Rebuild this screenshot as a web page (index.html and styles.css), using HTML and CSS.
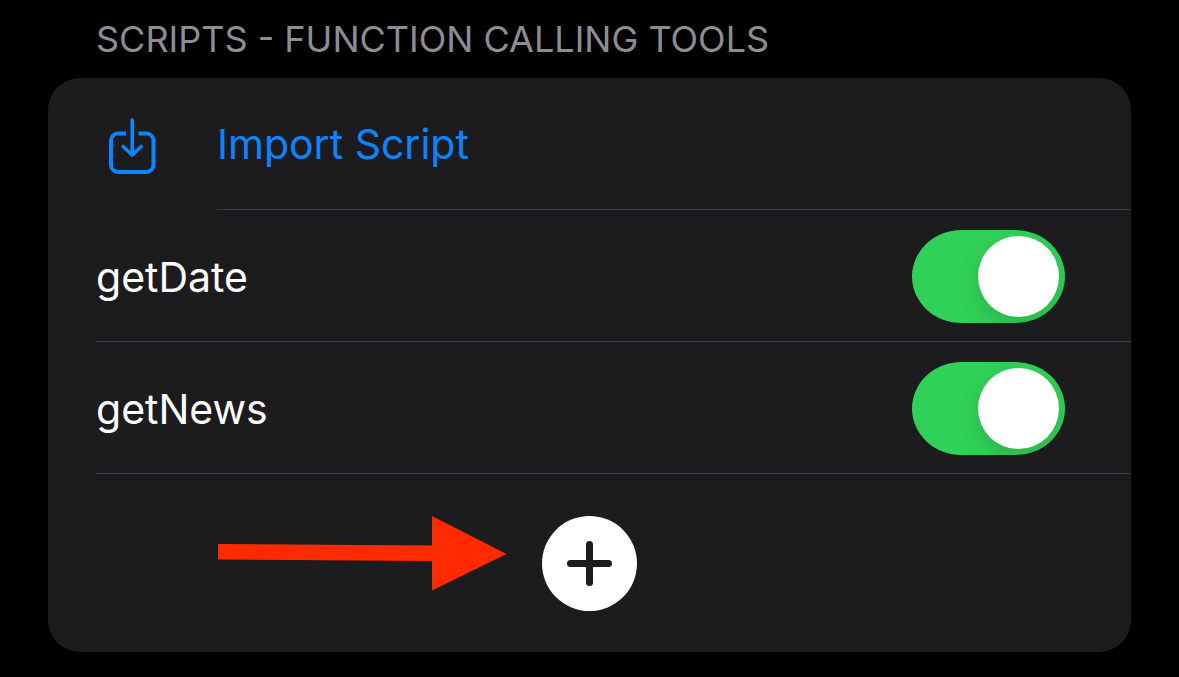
FILE: index.html
```html
<!DOCTYPE html>
<html lang="en">
<head>
<meta charset="utf-8">
<meta name="viewport" content="width=device-width, initial-scale=1">
<title>Scripts</title>
<link rel="stylesheet" href="styles.css">
</head>
<body>
<main class="settings">
  <h2 class="section-title">SCRIPTS - FUNCTION CALLING TOOLS</h2>
  <section class="card">
    <button class="import" type="button">
      <svg class="import-icon" width="48" height="56" viewBox="0 0 48 56" fill="none" stroke="currentColor" stroke-width="4" stroke-linecap="round" stroke-linejoin="round" aria-hidden="true">
        <path stroke-linecap="butt" d="M18 15.500H10a7 7 0 0 0-7 7V47a7 7 0 0 0 7 7H38.500a7 7 0 0 0 7-7V22.500a7 7 0 0 0-7-7H30.500"/>
        <path stroke-width="3.600" d="M24.200 2V36.500M15.200 28.500L24.200 37L33.200 28.500"/>
      </svg>
      <span class="import-label">Import Script</span>
    </button>
    <div class="row">
      <label class="row-label" for="get-date">getDate</label>
      <input class="switch" type="checkbox" id="get-date" checked>
    </div>
    <div class="row">
      <label class="row-label" for="get-news">getNews</label>
      <input class="switch" type="checkbox" id="get-news" checked>
    </div>
    <div class="add-row">
      <svg class="arrow" width="289" height="75" viewBox="0 0 289 75" fill="#ff2a00" aria-hidden="true">
        <path d="M0 28L214 29.500V0L288.500 38L214 74.500V45L0 43.500Z"/>
      </svg>
      <button class="add" type="button" aria-label="Add script">
        <svg width="45" height="45" viewBox="0 0 45 45" fill="none" stroke="currentColor" stroke-width="7" stroke-linecap="round" aria-hidden="true">
          <path d="M22.500 3.500V41.500M3.500 22.500H41.500"/>
        </svg>
      </button>
    </div>
  </section>
</main>
</body>
</html>
```
FILE: styles.css
```css
* {
  box-sizing: border-box;
}

body {
  margin: 0;
  background: #000;
  color: #fff;
  font-family: Inter, "Liberation Sans", sans-serif;
  font-size: 41px;
  line-height: 52px;
}

button {
  margin: 0;
  padding: 0;
  border: 0;
  background: none;
  font: inherit;
  cursor: pointer;
}

.settings {
  padding: 16px 48px 24px;
}

.section-title {
  margin: 0 0 16px;
  padding: 0 48px;
  color: #8d8d93;
  font-size: 36px;
  font-weight: 400;
  line-height: 46px;
}

.card {
  overflow: hidden;
  border-radius: 32px;
  background: #1c1c1e;
}

.import {
  display: flex;
  align-items: stretch;
  width: 100%;
  padding-left: 60px;
  color: #0a84ff;
  text-align: left;
}

.import-icon {
  flex: none;
  margin: 40px 61px 36px 0;
}

.import-label {
  flex: 1;
  padding: 40px 0 39px;
  border-bottom: 1px solid #3d3d41;
}

.row {
  display: flex;
  align-items: center;
  justify-content: space-between;
  min-height: 132px;
  margin-left: 48px;
  padding: 2px 66px 0 0;
  border-bottom: 1px solid #3d3d41;
}

.switch {
  appearance: none;
  flex: none;
  width: 153px;
  height: 93px;
  margin: 0;
  padding: 6px;
  overflow: hidden;
  border-radius: 50px / 47px;
  background: #5a5a5f;
  cursor: pointer;
}

.switch::before {
  content: "";
  display: block;
  width: 81px;
  height: 81px;
  border-radius: 50%;
  background: #fff;
  box-shadow: 0 8px 22px rgba(0, 0, 0, 0.15);
}

.switch:checked {
  background: #30d158;
}

.switch:checked::before {
  margin-left: auto;
}

.add-row {
  display: grid;
  grid-template-columns: 1fr auto 1fr;
  column-gap: 35px;
  padding: 42px 0 41px;
}

.arrow {
  justify-self: end;
}

.add {
  display: grid;
  grid-column: 2;
  place-items: center;
  width: 95px;
  height: 95px;
  border-radius: 50%;
  background: #fff;
  color: #1c1c1e;
}
```
